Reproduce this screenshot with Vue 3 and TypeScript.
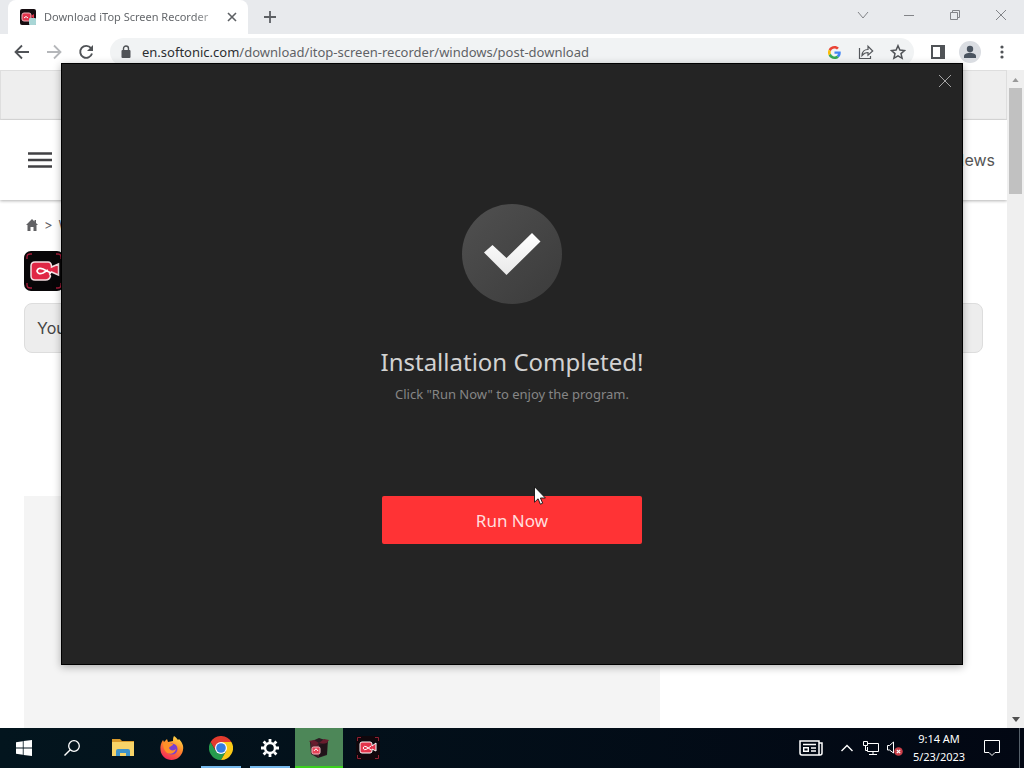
<script setup lang="ts">
import { ref } from 'vue'

const address = ref<string>('en.softonic.com/download/itop-screen-recorder/windows/post-download')
</script>

<template>
  <div class="desktop">
    <header class="tabstrip">
      <div class="tab">
        <svg class="favicon" viewBox="0 0 16 16" width="16" height="16" aria-hidden="true">
          <rect width="16" height="16" rx="2" fill="#160c10" />
          <rect x="2" y="4" width="9" height="8" rx="2" fill="#e2344c" stroke="#f4b6be" />
          <path d="M11 7l3-2v5z" fill="#e2344c" />
          <path d="M4 9q2-3 4 0" stroke="#fff" fill="none" />
          <rect x="9" y="9" width="7" height="7" rx="1" fill="#a9d6d6" />
        </svg>
        <span class="tab-title">Download iTop Screen Recorder</span>
        <button class="bare tab-close" aria-label="Close tab">
          <svg viewBox="0 0 10 10" width="10" height="10"><path d="M1 1l8 8M9 1l-8 8" stroke="#5d6064" stroke-width="1.6" /></svg>
        </button>
      </div>
      <button class="bare new-tab" aria-label="New tab">
        <svg viewBox="0 0 12 12" width="12" height="12"><path d="M6 0v12M0 6h12" stroke="#5d6064" stroke-width="1.8" /></svg>
      </button>
      <div class="window-controls">
        <button class="bare" aria-label="Search tabs"><svg viewBox="0 0 12 12" width="12" height="12"><path d="M1 3l5 6 5-6" /></svg></button>
        <button class="bare" aria-label="Minimize"><svg viewBox="0 0 12 12" width="12" height="12"><path d="M1 6.500h10" /></svg></button>
        <button class="bare" aria-label="Restore"><svg viewBox="0 0 12 12" width="12" height="12"><path d="M1.500 3.500h7v7h-7zM3.500 3.500v-2h7v7h-2" /></svg></button>
        <button class="bare" aria-label="Close"><svg viewBox="0 0 12 12" width="12" height="12"><path d="M1 1l10 10M11 1L1 11" /></svg></button>
      </div>
    </header>

    <div class="toolbar">
      <button class="bare tool" aria-label="Back">
        <svg viewBox="0 0 16 16" width="16" height="16"><path d="M15 8H2M8 1.500L1.500 8 8 14.500" fill="none" stroke="#505357" stroke-width="1.800" /></svg>
      </button>
      <button class="bare tool" aria-label="Forward">
        <svg viewBox="0 0 16 16" width="16" height="16"><path d="M1 8h13M8 1.500L14.500 8 8 14.500" fill="none" stroke="#b5b7ba" stroke-width="1.800" /></svg>
      </button>
      <button class="bare tool" aria-label="Reload">
        <svg viewBox="0 0 16 16" width="16" height="16"><path d="M13 4.200A6 6 0 1 0 14 9.500" fill="none" stroke="#505357" stroke-width="1.900" /><path d="M15 1v6H9z" fill="#505357" /></svg>
      </button>
      <div class="omnibox">
        <svg class="lock" viewBox="0 0 10 14" width="10" height="14" aria-hidden="true"><rect x="0.500" y="5" width="9" height="8" rx="1" fill="#505357" /><path d="M2.500 6V3.500a2.500 2.500 0 0 1 5 0V6" fill="none" stroke="#505357" stroke-width="1.400" /></svg>
        <div class="url"><span>en.softonic.com</span>{{ address.slice(15) }}</div>
        <button class="bare tool" aria-label="Search with Google">
          <svg viewBox="0 0 48 48" width="13" height="13">
            <path fill="#ea4335" d="M24 9.500c3.500 0 6.700 1.200 9.200 3.600l6.900-6.900C35.900 2.400 30.500 0 24 0 14.600 0 6.500 5.400 2.600 13.200l8 6.200C12.400 13.700 17.700 9.500 24 9.500z" />
            <path fill="#4285f4" d="M47 24.500c0-1.600-.2-3.100-.4-4.500H24v9h12.900c-.6 3-2.300 5.500-4.800 7.200l7.700 6C44.400 38 47 31.800 47 24.500z" />
            <path fill="#fbbc05" d="M10.500 28.600A14 14 0 0 1 10.500 19.400l-7.900-6.200a24 24 0 0 0 0 21.600z" />
            <path fill="#34a853" d="M24 48c6.500 0 11.900-2.100 15.900-5.800l-7.700-6A14.500 14.500 0 0 1 10.500 28.600l-8 6.200C6.500 42.600 14.600 48 24 48z" />
          </svg>
        </button>
        <button class="bare tool" aria-label="Share">
          <svg viewBox="0 0 16 16" width="16" height="16"><path d="M1.500 4v10.500h11V12M4 11.500C4.200 7.500 6 5.500 10 5.500V2.300L14.700 7 10 11.200V8.500C7.500 8.500 5.800 9.300 4 11.500z" fill="none" stroke="#55585c" stroke-width="1.200" /></svg>
        </button>
        <button class="bare tool" aria-label="Bookmark this page">
          <svg viewBox="0 0 16 16" width="16" height="16"><path d="M8 1.700l1.900 4.400 4.600.4-3.500 3.100 1.100 4.700L8 11.800l-4.100 2.500L5 9.600 1.500 6.500l4.600-.4z" fill="none" stroke="#505357" stroke-width="1.500" /></svg>
        </button>
      </div>
      <button class="bare tool" aria-label="Side panel">
        <svg viewBox="0 0 14 14" width="14" height="14"><path d="M1 1h12v12H1z" fill="none" stroke="#505357" stroke-width="2" /><path d="M9 1h4v12H9z" fill="#505357" /></svg>
      </button>
      <button class="bare tool" aria-label="Profile">
        <svg viewBox="0 0 22 22" width="22" height="22"><circle cx="11" cy="11" r="11" fill="#dadde2" /><circle cx="11" cy="8" r="3.200" fill="#4a5460" /><path d="M5 17v-2c0-2.300 4-3.300 6-3.300s6 1 6 3.300v2z" fill="#4a5460" /></svg>
      </button>
      <button class="bare tool" aria-label="Menu">
        <svg viewBox="0 0 4 14" width="4" height="14"><g fill="#505357"><circle cx="2" cy="2" r="1.600" /><circle cx="2" cy="7" r="1.600" /><circle cx="2" cy="12" r="1.600" /></g></svg>
      </button>
    </div>

    <div class="viewport">
      <main class="page">
        <div class="promo"></div>
        <div class="site-header">
          <button class="bare" aria-label="Open menu">
            <svg viewBox="0 0 24 16" width="24" height="16"><path d="M0 1.500h24M0 8h24M0 14.500h24" stroke="#414144" stroke-width="2.600" /></svg>
          </button>
          <a href="#" class="nav-link">News</a>
        </div>
        <div class="content">
          <nav class="crumbs">
            <a href="#" aria-label="Home"><svg viewBox="0 0 12 12" width="12" height="12"><path d="M6 0L0 6h1.500v6h3V8h3v4h3V6H12L10 4V1H8.500v1.500z" fill="#606063" /></svg></a>
            <span>&gt;</span>
            <a href="#">Windows</a>
          </nav>
          <svg class="app-icon" viewBox="0 0 40 40" width="40" height="40" aria-hidden="true">
            <rect width="40" height="40" rx="7" fill="#080608" />
            <path d="M3 8V6q0-3 3-3h2M32 3h2q3 0 3 3v2M3 32v2q0 3 3 3h2M32 37h2q3 0 3-3v-2" fill="none" stroke="#a51b39" stroke-width="1.300" />
            <path d="M11 11h13q3 0 3.500 4v1l7-3v11l-7-3-2 2 1 2q-1 4-5 4H11q-4 0-4-4V15q0-4 4-4z" fill="#e02745" stroke="#f6dfe2" stroke-width="1.500" />
            <path d="M27 22L19 18q-5-2-6 2 1 4 6 2l5-3" fill="none" stroke="#fff" stroke-width="1.700" />
          </svg>
          <div class="notice">You</div>
          <div class="placeholder"></div>
        </div>
      </main>
      <div class="scrollbar" aria-hidden="true">
        <svg viewBox="0 0 8 5" width="7" height="4"><path d="M0 5l4-5 4 5z" fill="#999" /></svg>
        <div class="thumb"></div>
        <svg viewBox="0 0 8 5" width="8" height="5"><path d="M0 0l4 5 4-5z" fill="#505050" /></svg>
      </div>
    </div>

    <div class="overlay">
      <section class="installer" role="dialog" aria-labelledby="done-title">
        <button class="bare dismiss" aria-label="Close installer">
          <svg viewBox="0 0 14 14" width="14" height="14"><path d="M1 1l12 12M13 1L1 13" stroke="#a5a5a5" /></svg>
        </button>
        <svg class="badge" viewBox="0 0 100 100" width="100" height="100" aria-hidden="true">
          <defs>
            <linearGradient id="disc" x1="0" y1="0" x2="1" y2="1"><stop offset="0" stop-color="#505050" /><stop offset="1" stop-color="#3b3b3b" /></linearGradient>
            <linearGradient id="tick" x1="0" y1="0" x2="0" y2="1"><stop offset="0" stop-color="#fff" /><stop offset="1" stop-color="#e9e9e9" /></linearGradient>
          </defs>
          <circle cx="50" cy="50" r="50" fill="url(#disc)" />
          <path d="M22 48.500l8.500-7.500L44.500 54 70 29l8.500 8.500L44.500 71z" fill="url(#tick)" />
        </svg>
        <h1 id="done-title">Installation Completed!</h1>
        <p>Click "Run Now" to enjoy the program.</p>
        <button class="run">Run Now</button>
      </section>
    </div>

    <footer class="taskbar">
      <button class="bare task" aria-label="Start">
        <svg viewBox="0 0 16 16" width="16" height="16"><path d="M0 2.200L6.800 1.200v6.400H0zM7.600 1.100L16 0v7.600H7.600zM0 8.400h6.800v6.400L0 13.800zM7.600 8.400H16V16l-8.400-1.100z" fill="#fff" /></svg>
      </button>
      <button class="bare task" aria-label="Search">
        <svg viewBox="0 0 16 16" width="16" height="16"><circle cx="10" cy="6" r="5.300" fill="none" stroke="#fff" stroke-width="1.300" /><path d="M6.300 9.700L.5 15.500" stroke="#fff" stroke-width="1.400" /></svg>
      </button>
      <div class="apps">
        <button class="bare task" aria-label="File Explorer">
          <svg viewBox="0 0 22 18" width="22" height="18"><path d="M0 0h8l2 2h12v4H0z" fill="#d99a2b" /><path d="M0 3h22v14H0z" fill="#f8d468" /><path d="M4 17v-5q0-2 2-2h10q2 0 2 2v5h-4v-3H8v3z" fill="#3f93c9" /></svg>
        </button>
        <button class="bare task" aria-label="Firefox">
          <svg viewBox="0 0 24 24" width="24" height="24">
            <defs><linearGradient id="fox" x1="0.800" y1="0" x2="0.300" y2="1"><stop offset="0" stop-color="#ffe14a" /><stop offset="0.450" stop-color="#ff8a2a" /><stop offset="1" stop-color="#f3255a" /></linearGradient></defs>
            <path d="M14 0c2 1 3 3 4 4l1-1c3 3 5 7 4 11-1 6-6 10-11.500 10S1 20 .500 14C0 10 1 7 3 4l1 2 3-3 1 3 5-1c0-2 0-3 1-5z" fill="url(#fox)" />
            <circle cx="12" cy="13" r="5.500" fill="#7a3fd0" />
            <path d="M3 7c3-1 5 0 6 1h4c0 2-3 2-4 4 1 3 5 3 7 1-1 5-7 6-10 3-2-2-3-5-3-9z" fill="#ff9128" />
          </svg>
        </button>
        <button class="bare task open" aria-label="Google Chrome">
          <svg viewBox="0 0 24 24" width="24" height="24">
            <path d="M1.600 6L6.800 15 12 18l5.200-3L12 24A12 12 0 0 1 1.600 6z" fill="#269b4d" />
            <path d="M1.600 6L12 6l5.200 9L12 24A12 12 0 0 0 22.400 6z" fill="#fbc917" />
            <path d="M12 6h10.400A12 12 0 0 0 1.600 6L7 15z" fill="#e33b2e" />
            <circle cx="12" cy="12" r="6" fill="#fff" /><circle cx="12" cy="12" r="4.800" fill="#347de0" />
          </svg>
        </button>
        <button class="bare task open" aria-label="Settings">
          <svg viewBox="0 0 18 18" width="18" height="18"><g stroke="#fff" fill="none"><circle cx="9" cy="9" r="5" stroke-width="2.400" /><path d="M9 0v3M9 15v3M0 9h3M15 9h3M2.600 2.600l2.200 2.200M13.200 13.200l2.200 2.200M2.600 15.400l2.200-2.200M13.200 4.800l2.200-2.200" stroke-width="2.800" /></g></svg>
        </button>
        <button class="bare task active" aria-label="iTop installer">
          <svg viewBox="0 0 22 22" width="22" height="22"><path d="M2 5l9-4 9 3-1 14-9 3-7-4z" fill="#2b1c22" /><path d="M3 5l8 3v12l-8-4z" fill="#54202c" /><path d="M1 4l5-1 5 3-4 3zM11 6l5-4 5 1-3 4z" fill="#681c2d" /><path d="M11 8l8-2v11l-8 3z" fill="#211319" /><rect x="4" y="10" width="8" height="7" rx="1.500" fill="#e54357" stroke="#f3bec3" /><path d="M6 14q2-4 4 0" stroke="#fff" fill="none" /></svg>
        </button>
        <button class="bare task" aria-label="iTop Screen Recorder">
          <svg viewBox="0 0 24 24" width="24" height="24"><rect width="24" height="24" rx="3" fill="#10070c" /><path d="M1.500 5V1.500H5M19 1.500h3.500V5M1.500 19v3.500H5M19 22.500h3.500V19" fill="none" stroke="#8e2033" /><path d="M6 6h8q2 0 2 2v2l4-3v8l-4-2v2q0 2-2 2H6q-2 0-2-2V8q0-2 2-2z" fill="#e3344b" stroke="#fff" /><path d="M15 14l-4-3q-3-2-4 1 1 3 4 1l4-3" fill="none" stroke="#fff" /></svg>
        </button>
      </div>
      <div class="tray">
        <button class="bare news" aria-label="News and interests">
          <svg viewBox="0 0 24 16" width="24" height="16"><path d="M1 1h19v14H3q-2 0-2-2zM20 3h3v10q0 2-2 2h-2M4 4.500h13M12 8h5M12 11h5" fill="none" stroke="#fff" stroke-width="1.500" /><path d="M4.700 7.700h4.600v3.600H4.700z" fill="none" stroke="#fff" stroke-width="1.400" /></svg>
        </button>
        <button class="bare status" aria-label="Show hidden icons">
          <svg viewBox="0 0 12 8" width="12" height="8"><path d="M.500 7L6 1.500 11.500 7" fill="none" stroke="#fff" stroke-width="1.400" /></svg>
        </button>
        <button class="bare status" aria-label="Network">
          <svg viewBox="0 0 16 15" width="16" height="15"><path d="M5 2.500h10.500v8H4.500V6M10 10.500v3M6 13.500h8M.500.500h4v4h-4zM2.500 4.500v5h2" fill="none" stroke="#fff" /></svg>
        </button>
        <button class="bare status" aria-label="Volume muted">
          <svg viewBox="0 0 16 15" width="16" height="15"><path d="M.500 4.500h2L6.500 1v11L2.500 9h-2z" fill="none" stroke="#fff" /><circle cx="11.500" cy="10.500" r="4.300" fill="#c93e48" /><path d="M9.800 8.800l3.400 3.400M13.200 8.800l-3.400 3.400" stroke="#fff" stroke-width="1.200" /></svg>
        </button>
        <div class="clock"><time>9:14 AM</time><time>5/23/2023</time></div>
        <button class="bare action" aria-label="Notifications">
          <svg viewBox="0 0 16 16" width="16" height="16"><path d="M.500.500h15v12h-4.500L8 15.500l-3-3H.500z" fill="none" stroke="#fff" /></svg>
        </button>
        <div class="peek"></div>
      </div>
    </footer>

    <svg class="cursor" viewBox="0 0 12 19" width="12" height="19" aria-hidden="true"><path d="M.500.700v15.500l3.600-3.400 2.300 5.400 2.300-1-2.300-5.200h5z" fill="#fff" stroke="#111" stroke-width="0.900" /></svg>
  </div>
</template>

<style>
body {
  margin: 0;
}
</style>

<style scoped>
.desktop {
  position: relative;
  display: flex;
  flex-direction: column;
  height: 100vh;
  overflow: hidden;
  background: #fff;
  color: #45484c;
  font-family: "Noto Sans", "Open Sans", sans-serif;
}
.bare {
  display: flex;
  align-items: center;
  justify-content: center;
  padding: 0;
  border: 0;
  background: none;
  color: inherit;
  font: inherit;
}
svg {
  display: block;
  flex: none;
}
a {
  color: inherit;
  text-decoration: none;
}
.tabstrip {
  display: flex;
  flex: none;
  height: 34px;
  padding-left: 8px;
  background: #e8eaed;
}
.tab {
  display: flex;
  align-items: center;
  box-sizing: border-box;
  width: 240px;
  padding: 0 10px 0 12px;
  border-radius: 8px 8px 0 0;
  background: #fff;
}
.tab-title {
  flex: 1;
  margin: 0 12px 0 8px;
  overflow: hidden;
  color: #65686c;
  font-size: 11px;
  line-height: 20px;
  white-space: nowrap;
  mask-image: linear-gradient(90deg, #000 88%, rgba(0, 0, 0, 0.4));
}
.tab-close {
  width: 12px;
}
.new-tab {
  width: 44px;
}
.window-controls {
  display: flex;
  margin-left: auto;
  height: 29px;
}
.window-controls .bare {
  width: 46px;
}
.window-controls path {
  fill: none;
  stroke: #828488;
}
.toolbar {
  display: flex;
  flex: none;
  align-items: center;
  height: 36px;
  padding: 0 6px;
}
.tool {
  flex: none;
  width: 32px;
  height: 28px;
}
.omnibox {
  display: flex;
  flex: 1;
  align-items: center;
  height: 28px;
  margin: 0 8px;
  padding-left: 11px;
  border-radius: 14px;
  background: #f1f3f4;
}
.url {
  flex: 1;
  margin-left: 11px;
  color: #5f6266;
  font-size: 13px;
  line-height: 20px;
  white-space: nowrap;
}
.url span {
  color: #2c2e31;
}
.viewport {
  display: flex;
  flex: 1;
  min-height: 0;
}
.page {
  flex: 1;
  overflow: hidden;
}
.promo {
  box-sizing: border-box;
  height: 50px;
  border: 1px solid #dedede;
  background: #eee;
}
.site-header {
  display: flex;
  align-items: center;
  justify-content: space-between;
  height: 80px;
  padding: 0 12px 0 28px;
  box-shadow: 0 1px 3px rgba(0, 0, 0, 0.3);
}
.nav-link {
  color: #555;
  font-family: Inter, sans-serif;
  font-size: 16px;
}
.content {
  padding: 15px 24px 0;
}
.crumbs {
  display: flex;
  align-items: center;
  gap: 6px;
  height: 20px;
  padding-left: 2px;
  color: #606063;
  font-family: Inter, sans-serif;
  font-size: 13px;
}
.app-icon {
  margin: 16px 0 12px;
}
.notice {
  box-sizing: border-box;
  height: 50px;
  padding: 0 12px;
  border: 1px solid #ddd;
  border-radius: 8px;
  background: #ededed;
  color: #444;
  font-family: Inter, sans-serif;
  font-size: 16px;
  line-height: 48px;
}
.placeholder {
  width: 636px;
  height: 300px;
  margin-top: 143px;
  background: #f4f4f4;
}
.scrollbar {
  display: flex;
  flex-direction: column;
  align-items: center;
  box-sizing: border-box;
  width: 17px;
  padding: 8px 0 6px;
  background: #efefef;
}
.thumb {
  width: 13px;
  height: 106px;
  margin: 6px 0 auto;
  background: #c1c1c1;
}
.overlay {
  position: absolute;
  inset: 0 0 40px;
  display: flex;
  align-items: center;
  justify-content: center;
  pointer-events: none;
}
.installer {
  position: relative;
  display: flex;
  flex-direction: column;
  align-items: center;
  box-sizing: border-box;
  width: 88%;
  padding: 140px 0 120px;
  border: 1px solid #000;
  background: #242424;
  box-shadow: 0 2px 8px rgba(0, 0, 0, 0.3);
  pointer-events: auto;
}
.dismiss {
  position: absolute;
  top: 4px;
  right: 4px;
  width: 26px;
  height: 26px;
}
h1 {
  margin: 40px 0 0;
  color: #d2d2d2;
  font-size: 24px;
  font-weight: 400;
  line-height: 36px;
}
p {
  margin: 4px 0 0;
  color: #868686;
  font-size: 13px;
  line-height: 20px;
}
.run {
  width: 260px;
  height: 48px;
  margin-top: 92px;
  padding: 0;
  border: 0;
  border-radius: 2px;
  background: #ff3335;
  color: #ffdede;
  font-family: inherit;
  font-size: 17px;
}
.taskbar {
  display: flex;
  flex: none;
  height: 40px;
  background: linear-gradient(90deg, #03151e, #020713);
  color: #fff;
}
.task {
  box-sizing: border-box;
  width: 48px;
}
.apps {
  display: flex;
  gap: 1px;
  margin-left: 3px;
}
.open {
  background: linear-gradient(#76b9ed, #76b9ed) center bottom / 40px 2px no-repeat;
}
.active {
  border-bottom: 2px solid #3bd01e;
  padding-top: 2px;
  background: #4d8758;
}
.tray {
  display: flex;
  margin-left: auto;
}
.news {
  width: 48px;
}
.status {
  width: 24px;
}
.clock {
  display: flex;
  flex-direction: column;
  align-items: center;
  justify-content: center;
  width: 60px;
  margin-left: 2px;
  font-size: 11px;
  line-height: 18px;
}
.action {
  width: 46px;
}
.peek {
  width: 4px;
  margin-left: 4px;
  border-left: 1px solid #56606a;
}
.cursor {
  position: absolute;
  left: 534px;
  top: 486px;
}
</style>
